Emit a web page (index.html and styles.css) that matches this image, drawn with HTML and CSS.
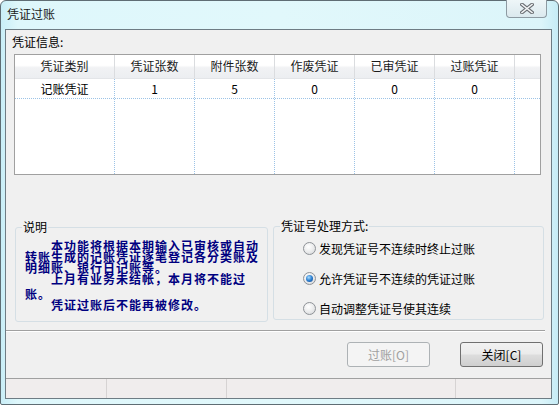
FILE: index.html
```html
<!DOCTYPE html>
<html lang="zh-CN">
<head>
    <meta charset="UTF-8">
    <title>凭证过账</title>
    <link rel="stylesheet" href="styles.css">
</head>
<body>

    <div class="window">
        <div class="titlebar">
            <span class="title">凭证过账</span>
            <span class="close-btn">
                <svg width="14" height="11" viewBox="0 0 14 11">
                    <path d="M2 1.5 L12 9.5 M12 1.5 L2 9.5" stroke="#6b6f74" stroke-width="3.6" stroke-linecap="square"/>
                    <path d="M2 1.5 L12 9.5 M12 1.5 L2 9.5" stroke="#f4f6f7" stroke-width="1.6" stroke-linecap="square"/>
                </svg>
            </span>
        </div>

        <div class="client">
            <div class="info-label">凭证信息:</div>

            <!-- list view -->
            <div class="grid">
                <div class="grid-head">
                    <div class="hcell w100">凭证类别</div>
                    <div class="hcell">凭证张数</div>
                    <div class="hcell">附件张数</div>
                    <div class="hcell">作废凭证</div>
                    <div class="hcell">已审凭证</div>
                    <div class="hcell">过账凭证</div>
                    <div class="hcell filler"></div>
                </div>
                <div class="grid-body">
                    <div class="col w100"><div class="cell">记账凭证</div></div>
                    <div class="col"><div class="cell">1</div></div>
                    <div class="col"><div class="cell">5</div></div>
                    <div class="col"><div class="cell">0</div></div>
                    <div class="col"><div class="cell">0</div></div>
                    <div class="col"><div class="cell">0</div></div>
                    <div class="col filler"><div class="cell"></div></div>
                </div>
            </div>

            <div class="groups">
                <fieldset class="group note">
                    <legend>说明</legend>
                    <div class="note-text">
                        <div class="ln">　　本功能将根据本期输入已审核或自动</div>
                        <div class="ln">转账生成的记账凭证逐笔登记各分类账及</div>
                        <div class="ln">明细账、银行日记账等。</div>
                        <div class="ln">　　上月有业务未结帐，本月将不能过</div>
                        <div class="ln gap">账。</div>
                        <div class="ln">　　凭证过账后不能再被修改。</div>
                    </div>
                </fieldset>

                <fieldset class="group mode">
                    <legend>凭证号处理方式:</legend>
                    <div class="radio"><span class="dot"></span>发现凭证号不连续时终止过账</div>
                    <div class="radio"><span class="dot on"></span>允许凭证号不连续的凭证过账</div>
                    <div class="radio"><span class="dot"></span>自动调整凭证号使其连续</div>
                </fieldset>
            </div>

            <div class="separator"></div>

            <div class="buttons">
                <button class="btn disabled">过账[O]</button>
                <button class="btn">关闭[C]</button>
            </div>

            <div class="statusbar">
                <div class="pane p1"></div>
                <div class="pane p2"></div>
                <div class="pane p3"></div>
                <div class="pane p4"></div>
            </div>
        </div>
    </div>

</body>
</html>
```

FILE: styles.css
```css
body {
    margin: 0;
    font-family: "Noto Sans CJK SC", "Liberation Sans", sans-serif;
    font-size: 12px;
    color: #000;
    background: #fff;
}
.window {
    width: 559px;
    height: 405px;
    box-sizing: border-box;
    border: 1px solid #5f6d74;
    border-radius: 6px 6px 2px 2px;
    background: linear-gradient(90deg, #c9eef7 0%, #def7fb 3%, #e1f8fb 50%, #dcf5fa 97%, #c6ecf6 100%);
    padding: 0 6px 0 4px;
    display: flex;
    flex-direction: column;
}
.titlebar {
    height: 28px;
    display: flex;
    justify-content: space-between;
    align-items: flex-start;
}
.title {
    margin: 6px 0 0 2px;
    line-height: 14px;
    color: #1a1a1a;
}
.close-btn {
    width: 41px;
    height: 18px;
    margin: -1px 5px 0 0;
    box-sizing: border-box;
    border: 1px solid #8d9aa2;
    border-top: none;
    border-radius: 0 0 4px 4px;
    background: linear-gradient(#eef6f8, #dbe9ee);
    display: flex;
    align-items: center;
    justify-content: center;
}
.client {
    height: 370px;
    box-sizing: border-box;
    border: 1px solid #6e7c84;
    background: #f0f0f0;
    display: flex;
    flex-direction: column;
}
.info-label {
    height: 24px;
    line-height: 24px;
    padding-left: 6px;
}

/* list view */
.grid {
    margin-left: 8px;
    width: 527px;
    height: 121px;
    box-sizing: border-box;
    border: 1px solid #a0a0a0;
    background: #fff;
    display: flex;
    flex-direction: column;
}
.grid-head {
    height: 23px;
    display: flex;
    background: linear-gradient(#ffffff 0%, #ffffff 45%, #f1f2f4 55%, #eceef1 100%);
    border-bottom: 1px solid #e3e5e8;
}
.hcell {
    width: 80px;
    box-sizing: border-box;
    border-right: 1px solid #dadcdf;
    text-align: center;
    line-height: 22px;
    color: #1a1a1a;
}
.grid-body {
    flex: 1;
    display: flex;
}
.col {
    width: 80px;
    box-sizing: border-box;
    border-right: 1px dotted #9cc3e6;
}
.hcell.w100,
.col.w100 {
    width: 100px;
}
.hcell.filler,
.col.filler {
    flex: 1;
    border-right: none;
}
.cell {
    height: 19px;
    line-height: 19px;
    text-align: center;
    border-bottom: 1px dotted #9cc3e6;
}

/* group boxes */
.groups {
    margin-top: 45px;
    height: 102px;
    display: flex;
    align-items: flex-start;
}
.group {
    margin: 0;
    padding: 0;
    box-sizing: border-box;
    border: 1px solid #d5dfe5;
    border-radius: 3px;
}
.group legend {
    margin-left: 6px;
    padding: 0 1px;
    line-height: 14px;
}
.note {
    margin-left: 9px;
    width: 253px;
    height: 102px;
}
.mode {
    margin: -1px 0 0 5px;
    width: 271px;
    height: 101px;
}
.note-text {
    padding: 6px 0 0 9px;
    color: #000080;
    font-weight: bold;
    font-size: 12px;
    letter-spacing: 1px;
    white-space: nowrap;
}
.ln {
    height: 11px;
    line-height: 11px;
}
.ln.gap {
    margin-top: 4px;
}
.radio {
    display: flex;
    align-items: center;
    height: 30px;
    padding-left: 29px;
}
.dot {
    width: 13px;
    height: 13px;
    box-sizing: border-box;
    border: 1px solid #8e9297;
    border-radius: 50%;
    background: radial-gradient(circle at 40% 35%, #ffffff 0%, #e9eaeb 55%, #cfd1d4 100%);
    margin-right: 3px;
    position: relative;
}
.dot.on::after {
    content: "";
    position: absolute;
    left: 2px;
    top: 2px;
    width: 7px;
    height: 7px;
    border-radius: 50%;
    background: radial-gradient(circle at 40% 35%, #a8dcff 0%, #2c7fd0 50%, #12428a 100%);
}

.separator {
    margin-top: 8px;
    width: 539px;
    border-top: 1px solid #a0a0a0;
    border-bottom: 1px solid #ffffff;
}
.buttons {
    height: 46px;
    box-sizing: border-box;
    padding: 10px 8px 0 0;
    display: flex;
    justify-content: flex-end;
    gap: 30px;
}
.btn {
    height: 25px;
    width: 83px;
    font-family: "Noto Sans CJK SC", "Liberation Sans", sans-serif;
    font-size: 12px;
    border: 1px solid #707070;
    border-radius: 3px;
    background: linear-gradient(#f2f2f2 0%, #ebebeb 48%, #dddddd 52%, #cfcfcf 100%);
    color: #000;
    padding: 0;
}
.btn.disabled {
    border-color: #adb2b5;
    background: #f4f4f4;
    color: #a0a0a0;
}
.statusbar {
    margin-top: auto;
    height: 20px;
    box-sizing: border-box;
    border-top: 1px solid #a0a0a0;
    background: #f0eded;
    display: flex;
}
.pane {
    border-right: 1px solid #d6d3d3;
}
.p1 {
    width: 100px;
}
.p2 {
    width: 119px;
}
.p3 {
    width: 228px;
}
.p4 {
    flex: 1;
    border-right: none;
}
```
